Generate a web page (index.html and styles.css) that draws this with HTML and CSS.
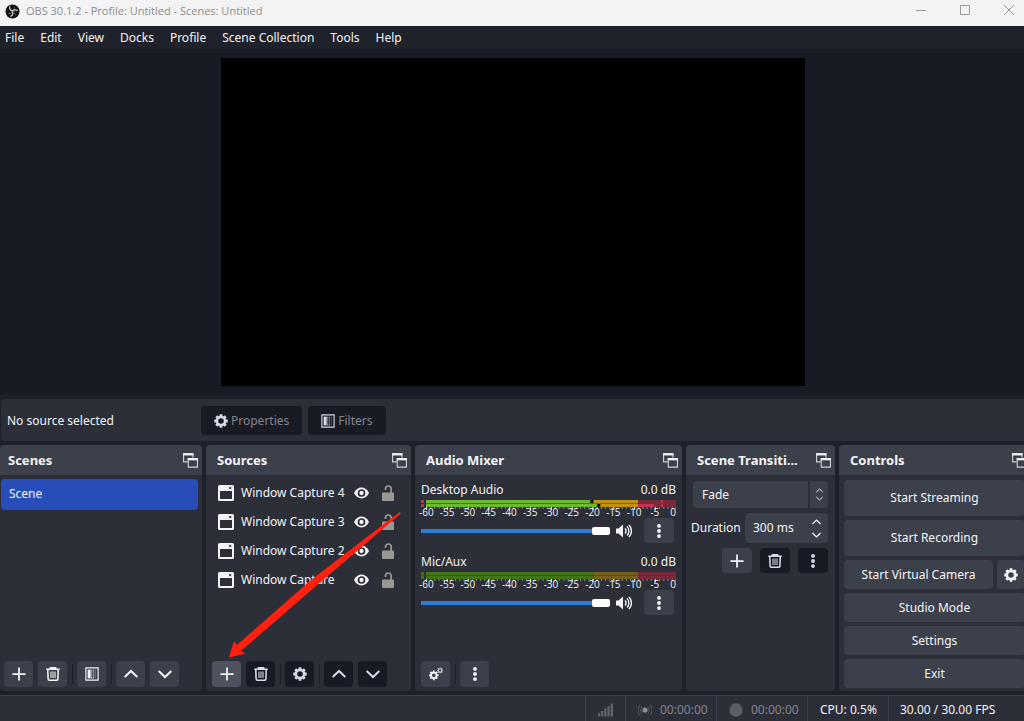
FILE: index.html
```html
<!DOCTYPE html>
<html lang="en">
<head>
    <meta charset="UTF-8">
    <meta name="viewport" content="width=device-width, initial-scale=1.0">
    <title>OBS 30.1.2 - Profile: Untitled - Scenes: Untitled</title>
    <link rel="stylesheet" href="styles.css">
</head>
<body>
    <svg class="sprite" aria-hidden="true">
        <symbol id="i-plus" viewBox="0 0 16 16"><path d="M8 .5v15M.5 8h15" stroke="currentColor" stroke-width="2" fill="none"/></symbol>
        <symbol id="i-trash" viewBox="0 0 16 16"><path d="M.3 2.600h15.400M5 2V.8h6V2M2 3l.4 10.500a1.700 1.700 0 0 0 1.700 1.700h7.800a1.700 1.700 0 0 0 1.700-1.700L14 3" fill="none" stroke="currentColor" stroke-width="1.800"/><path d="M5.700 5v7.500M8 5v7.500M10.300 5v7.500" stroke="currentColor" stroke-width="1.200"/></symbol>
        <symbol id="i-gear" viewBox="0 0 16 16"><circle cx="8" cy="8" r="4.700" fill="none" stroke="currentColor" stroke-width="3"/><path d="M8 .3v3M8 12.700v3M.3 8h3M12.700 8h3M2.600 2.600L5 5M11 11l2.400 2.400M13.400 2.600L11 5M5 11l-2.400 2.400" stroke="currentColor" stroke-width="3.200"/></symbol>
        <symbol id="i-gears" viewBox="0 0 16 16"><circle cx="5.500" cy="9.500" r="3.200" fill="none" stroke="currentColor" stroke-width="2.200"/><path d="M5.500 4v2M5.500 13v2M0 9.500h2M9 9.500h2M1.600 5.600L3 7M8 12l1.400 1.400M9.400 5.600L8 7M3 12l-1.400 1.400" stroke="currentColor" stroke-width="2"/><circle cx="12.700" cy="4" r="2" fill="none" stroke="currentColor" stroke-width="1.400" opacity=".8"/><path d="M12.700 .5v1M12.700 6.500v1M9.200 4h1M15.200 4h1M10.200 1.500l.7.700M14.500 5.800l.7.700M15.200 1.500l-.7.700M10.900 5.800l-.7.700" stroke="currentColor" stroke-width="1.300" opacity=".8"/></symbol>
        <symbol id="i-filter" viewBox="0 0 16 16"><path d="M1 1h14v14H1z" fill="none" stroke="currentColor" stroke-width="1.300"/><path d="M3 3h3.500v10H3z" fill="currentColor"/><path d="M7.500 3v10M9.500 3v10" stroke="currentColor" stroke-width="1.400" stroke-dasharray="1.200 1" opacity=".8"/><path d="M11.800 3v10" stroke="currentColor" stroke-width="1.600" opacity=".25"/></symbol>
        <symbol id="i-up" viewBox="0 0 16 16"><path d="M.8 11.500L8 4.500l7.200 7" fill="none" stroke="currentColor" stroke-width="2.200"/></symbol>
        <symbol id="i-down" viewBox="0 0 16 16"><path d="M.8 4.500L8 11.500l7.200-7" fill="none" stroke="currentColor" stroke-width="2.200"/></symbol>
        <symbol id="i-dots" viewBox="0 0 16 16"><circle cx="8" cy="2.200" r="2.200" fill="currentColor"/><circle cx="8" cy="8" r="2.200" fill="currentColor"/><circle cx="8" cy="13.800" r="2.200" fill="currentColor"/></symbol>
        <symbol id="i-float" viewBox="0 0 16 16"><path d="M5 9.500H.6V1h10v4" fill="none" stroke="currentColor" stroke-width="1.200" opacity=".8"/><path d="M0 .2h11.200v2.400H0z" fill="currentColor"/><path d="M5.600 6h9.800v9H5.600z" fill="none" stroke="currentColor" stroke-width="1.200" opacity=".8"/><path d="M5 5.400h11v2.400H5z" fill="currentColor"/></symbol>
        <symbol id="i-window" viewBox="0 0 16 16"><path d="M1.500 0h13A1.500 1.500 0 0 1 16 1.500v13a1.500 1.500 0 0 1-1.500 1.500h-13A1.500 1.500 0 0 1 0 14.500v-13A1.500 1.500 0 0 1 1.500 0zM2 6v8h12V6z" fill="currentColor" fill-rule="evenodd"/><path d="M11 1.800l2.400 2.400M13.400 1.800L11 4.200" stroke="#2c2e38" stroke-width="1"/></symbol>
        <symbol id="i-eye" viewBox="0 0 16 12"><path d="M0 6C1.800 2.200 4.700.2 8 .2S14.200 2.200 16 6c-1.800 3.800-4.700 5.800-8 5.800S1.800 9.800 0 6z" fill="currentColor"/><circle cx="8" cy="6" r="3.200" fill="none" stroke="#2c2e38" stroke-width="1.800"/></symbol>
        <symbol id="i-lock" viewBox="0 0 12 16"><path d="M3.500 5V3.800a2.800 2.800 0 0 1 5.600 0V8" fill="none" stroke="currentColor" stroke-width="1.700"/><rect y="7.500" width="12" height="8.500" rx="1" fill="currentColor"/></symbol>
        <symbol id="i-speaker" viewBox="0 0 16 14"><path d="M0 4.500h2.500L7 .5v13l-4.500-4H0z" fill="currentColor"/><path d="M9 4.500c1.300 1.500 1.300 3.500 0 5M11 2.600c2.600 2.600 2.600 6.200 0 8.800M13 1c3.300 3.500 3.300 8.500 0 12" fill="none" stroke="currentColor" stroke-width="1.400"/></symbol>
    </svg>

    <header class="titlebar">
        <svg class="logo" viewBox="0 0 16 16">
            <circle cx="8" cy="8" r="7.500" fill="#111"/>
            <path d="M5 2.500c-.5 2.500.7 4.300 3 4.700M13.300 7.200c-2-1.600-4.200-1.200-5.500.8M5.700 13.200c2.400-.9 3.200-3 2.200-5.200" fill="none" stroke="#ccc" stroke-width="1.400"/>
            <path d="M3 9.500c1.500 1 3.200.8 4.500-.7M10.500 3c-.9.900-1.300 2-.9 3.200M11.500 12c-.1-1.500-1-2.600-2.400-3" fill="none" stroke="#888" stroke-width=".8"/>
        </svg>
        <h1>OBS 30.1.2 - Profile: Untitled - Scenes: Untitled</h1>
        <div class="window-buttons">
            <button type="button" aria-label="Minimize"><svg viewBox="0 0 10 10"><path d="M0 5.500h10"/></svg></button>
            <button type="button" aria-label="Maximize"><svg viewBox="0 0 10 10"><path d="M.5.500h9v9h-9z"/></svg></button>
            <button type="button" aria-label="Close"><svg viewBox="0 0 10 10"><path d="M0 0l10 10M10 0L0 10"/></svg></button>
        </div>
    </header>

    <nav class="menubar">
        <a href="#">File</a>
        <a href="#">Edit</a>
        <a href="#">View</a>
        <a href="#">Docks</a>
        <a href="#">Profile</a>
        <a href="#">Scene Collection</a>
        <a href="#">Tools</a>
        <a href="#">Help</a>
    </nav>

    <main class="preview">
        <div class="canvas"></div>
    </main>

    <section class="context-bar">
        <span class="context-label">No source selected</span>
        <button type="button" class="btn dark" disabled><svg class="icon"><use href="#i-gear"/></svg>Properties</button>
        <button type="button" class="btn dark" disabled><svg class="icon"><use href="#i-filter"/></svg>Filters</button>
    </section>

    <div class="docks">
        <section class="dock">
            <header class="dock-title"><h2>Scenes</h2><svg class="icon"><use href="#i-float"/></svg></header>
            <ul class="scene-list">
                <li class="selected">Scene</li>
            </ul>
            <div class="toolbar">
                <button type="button" class="btn tool" aria-label="Add scene"><svg class="icon"><use href="#i-plus"/></svg></button>
                <button type="button" class="btn tool" aria-label="Remove scene"><svg class="icon"><use href="#i-trash"/></svg></button>
                <span class="sep"></span>
                <button type="button" class="btn tool" aria-label="Scene filters"><svg class="icon"><use href="#i-filter"/></svg></button>
                <span class="sep"></span>
                <button type="button" class="btn tool" aria-label="Move up"><svg class="icon"><use href="#i-up"/></svg></button>
                <button type="button" class="btn tool" aria-label="Move down"><svg class="icon"><use href="#i-down"/></svg></button>
            </div>
        </section>

        <section class="dock sources">
            <header class="dock-title"><h2>Sources</h2><svg class="icon"><use href="#i-float"/></svg></header>
            <ul class="source-list">
                <li><svg class="icon"><use href="#i-window"/></svg><span>Window Capture 4</span><svg class="eye"><use href="#i-eye"/></svg><svg class="lock"><use href="#i-lock"/></svg></li>
                <li><svg class="icon"><use href="#i-window"/></svg><span>Window Capture 3</span><svg class="eye"><use href="#i-eye"/></svg><svg class="lock"><use href="#i-lock"/></svg></li>
                <li><svg class="icon"><use href="#i-window"/></svg><span>Window Capture 2</span><svg class="eye"><use href="#i-eye"/></svg><svg class="lock"><use href="#i-lock"/></svg></li>
                <li><svg class="icon"><use href="#i-window"/></svg><span>Window Capture</span><svg class="eye"><use href="#i-eye"/></svg><svg class="lock"><use href="#i-lock"/></svg></li>
            </ul>
            <div class="toolbar">
                <button type="button" class="btn tool active" aria-label="Add source"><svg class="icon"><use href="#i-plus"/></svg></button>
                <button type="button" class="btn tool dark" aria-label="Remove source" disabled><svg class="icon"><use href="#i-trash"/></svg></button>
                <span class="sep"></span>
                <button type="button" class="btn tool dark" aria-label="Source properties" disabled><svg class="icon"><use href="#i-gear"/></svg></button>
                <span class="sep"></span>
                <button type="button" class="btn tool dark" aria-label="Move up" disabled><svg class="icon"><use href="#i-up"/></svg></button>
                <button type="button" class="btn tool dark" aria-label="Move down" disabled><svg class="icon"><use href="#i-down"/></svg></button>
            </div>
            <svg class="arrow" viewBox="228 511 174 148"><path d="M229 657.500L234 641l3 4 74-65 88.500-68 1.500 1.500-78 66.500-82 71 5 2.500z" fill="#ff2010"/></svg>
        </section>

        <section class="dock">
            <header class="dock-title"><h2>Audio Mixer</h2><svg class="icon"><use href="#i-float"/></svg></header>
            <div class="mixer">
                <div class="channel">
                    <div class="channel-head"><label for="desktop">Desktop Audio</label><span>0.0 dB</span></div>
                    <svg class="meter" viewBox="0 0 256 10" preserveAspectRatio="none">
                        <path d="M0 0h3v3H0zM0 4h3v3H0z" fill="#c8314f"/>
                        <path d="M5 0h167v3H5zM5 4h172v3H5z" fill="#6bb92c"/>
                        <path d="M5 3h167v1H5z" fill="#3f7a20"/>
                        <path d="M172 0h46v3h-46zM177 4h41v3h-41z" fill="#c09210"/>
                        <path d="M172 3h46v1h-46z" fill="#806420"/>
                        <path d="M218 0h38v7h-38z" fill="#782a3a"/>
                        <path d="M218 4h16v3h-16zM241 0h2v3h-2zM241 4h2v3h-2z" fill="#c8314f"/>
                        <path d="M170 0h3v3h-3zM177 4h3v3h-3z" fill="#000"/>
                        <use href="#ticks"/>
                    </svg>
                    <div class="scale"><span>-60</span><span>-55</span><span>-50</span><span>-45</span><span>-40</span><span>-35</span><span>-30</span><span>-25</span><span>-20</span><span>-15</span><span>-10</span><span>-5</span><span>0</span></div>
                    <div class="volume">
                        <input type="range" id="desktop" min="0" max="100" value="100">
                        <svg class="speaker"><use href="#i-speaker"/></svg>
                        <button type="button" class="btn" aria-label="Desktop Audio menu"><svg class="icon"><use href="#i-dots"/></svg></button>
                    </div>
                </div>
                <div class="channel">
                    <div class="channel-head"><label for="mic">Mic/Aux</label><span>0.0 dB</span></div>
                    <svg class="meter" viewBox="0 0 256 10" preserveAspectRatio="none">
                        <defs>
                            <g id="ticks">
                                <path d="M5 8H256" stroke="#8b8d94" stroke-width="2" stroke-dasharray="1 3.180"/>
                                <path d="M5 8.500H256.500" stroke="#e8e8ea" stroke-width="3" stroke-dasharray="1 19.900"/>
                            </g>
                        </defs>
                        <path d="M0 0h3v7H0zM5 0h168v7H5z" fill="#427418"/>
                        <path d="M173 0h45v7h-45z" fill="#76601c"/>
                        <path d="M218 0h38v7h-38z" fill="#782a3a"/>
                        <path d="M0 3h256v1H0z" fill="#2c2e38" opacity=".4"/>
                        <use href="#ticks"/>
                    </svg>
                    <div class="scale"><span>-60</span><span>-55</span><span>-50</span><span>-45</span><span>-40</span><span>-35</span><span>-30</span><span>-25</span><span>-20</span><span>-15</span><span>-10</span><span>-5</span><span>0</span></div>
                    <div class="volume">
                        <input type="range" id="mic" min="0" max="100" value="100">
                        <svg class="speaker"><use href="#i-speaker"/></svg>
                        <button type="button" class="btn" aria-label="Mic/Aux menu"><svg class="icon"><use href="#i-dots"/></svg></button>
                    </div>
                </div>
            </div>
            <div class="toolbar">
                <button type="button" class="btn tool" aria-label="Advanced audio properties"><svg class="icon"><use href="#i-gears"/></svg></button>
                <span class="sep"></span>
                <button type="button" class="btn tool" aria-label="Mixer menu"><svg class="icon"><use href="#i-dots"/></svg></button>
            </div>
        </section>

        <section class="dock">
            <header class="dock-title"><h2>Scene Transiti...</h2><svg class="icon"><use href="#i-float"/></svg></header>
            <div class="transitions">
                <div class="combo">
                    <select aria-label="Transition">
                        <option>Fade</option>
                    </select>
                    <span class="combo-arrows"><svg><use href="#i-up"/></svg><svg><use href="#i-down"/></svg></span>
                </div>
                <div class="duration">
                    <label for="duration">Duration</label>
                    <div class="spin">
                        <input type="text" id="duration" value="300 ms">
                        <span class="spin-arrows"><svg><use href="#i-up"/></svg><svg><use href="#i-down"/></svg></span>
                    </div>
                </div>
                <div class="transition-buttons">
                    <button type="button" class="btn" aria-label="Add transition"><svg class="icon"><use href="#i-plus"/></svg></button>
                    <button type="button" class="btn dark" aria-label="Remove transition" disabled><svg class="icon"><use href="#i-trash"/></svg></button>
                    <button type="button" class="btn dark" aria-label="Transition menu" disabled><svg class="icon"><use href="#i-dots"/></svg></button>
                </div>
            </div>
        </section>

        <section class="dock">
            <header class="dock-title controls-title"><h2>Controls</h2><svg class="icon"><use href="#i-float"/></svg></header>
            <div class="controls">
                <button type="button" class="btn tall">Start Streaming</button>
                <button type="button" class="btn tall">Start Recording</button>
                <div class="camera">
                    <button type="button" class="btn">Start Virtual Camera</button>
                    <button type="button" class="btn" aria-label="Virtual camera settings"><svg class="icon"><use href="#i-gear"/></svg></button>
                </div>
                <button type="button" class="btn">Studio Mode</button>
                <button type="button" class="btn">Settings</button>
                <button type="button" class="btn">Exit</button>
            </div>
        </section>
    </div>

    <footer class="statusbar">
        <div class="signal"><svg viewBox="0 0 16 14"><path d="M0 10h2v4H0zM3 8h2.500v6H3zM6.500 5.500H9V14H6.500zM10 3h2.500v11H10zM13.500 0H16v14h-2.500z" fill="#62646c"/></svg></div>
        <div class="timer"><svg viewBox="0 0 14 14"><circle cx="7" cy="7" r="2.600" fill="#8c8e94"/><path d="M4 3.500c-1.600 2-1.600 5 0 7M10 3.500c1.600 2 1.600 5 0 7M2 1.500c-2.500 3-2.500 8 0 11M12 1.500c2.500 3 2.500 8 0 11" fill="none" stroke="#5a5c64" stroke-width="1"/></svg>00:00:00</div>
        <div class="timer"><svg viewBox="0 0 14 14"><circle cx="7" cy="7" r="6.700" fill="#5c5e66"/></svg>00:00:00</div>
        <div class="cpu">CPU: 0.5%</div>
        <div class="fps">30.00 / 30.00 FPS</div>
    </footer>
</body>
</html>
```
FILE: styles.css
```css
* {
    box-sizing: border-box;
    margin: 0;
    padding: 0;
}

body {
    display: flex;
    flex-direction: column;
    gap: 4px;
    height: 100vh;
    overflow: hidden;
    background: #1e202a;
    color: #f4f4f6;
    font-family: "Noto Sans", "Open Sans", sans-serif;
    font-size: 12px;
    line-height: 16px;
}

button,
input,
select {
    font: inherit;
    color: inherit;
    border: none;
}

ul {
    list-style: none;
}

.sprite {
    position: absolute;
    width: 0;
    height: 0;
}

.icon {
    width: 14px;
    height: 14px;
    flex: none;
}

/* Title bar and menu */
.titlebar {
    display: flex;
    align-items: center;
    height: 26px;
    padding: 0 0 4px 5px;
    background: #f3f3f3;
    color: #8e8e8e;
    margin-bottom: -4px;
}

.titlebar h1 {
    flex: 1;
    font-family: "Open Sans", sans-serif;
    font-size: 11px;
    font-weight: 400;
}

.logo {
    width: 15px;
    height: 15px;
    margin-right: 6px;
}

.window-buttons {
    display: flex;
    margin-right: -7px;
}

.window-buttons button {
    width: 44px;
    height: 20px;
    background: none;
}

.window-buttons svg {
    width: 10px;
    height: 10px;
    fill: none;
    stroke: #999;
    overflow: visible;
}

.menubar {
    display: flex;
    gap: 16px;
    height: 23px;
    padding: 4px 5px;
    background: #1f222a;
    margin-bottom: -4px;
}

.menubar a {
    color: inherit;
    text-decoration: none;
}

/* Preview */
.preview {
    flex: 1;
    min-height: 0;
    display: flex;
    justify-content: center;
    padding: 9px 0 9px 2px;
    background: #181a24;
}

.canvas {
    height: 100%;
    aspect-ratio: 16 / 9;
    background: #000;
}

/* Buttons */
.btn {
    display: flex;
    align-items: center;
    justify-content: center;
    gap: 3px;
    background: #3c404b;
    border-radius: 4px;
}

.btn.dark {
    background: #181a24;
    color: #d8d9e4;
}

.btn.active {
    background: #4f525e;
}

.context-bar {
    display: flex;
    align-items: center;
    gap: 6px;
    height: 42px;
    padding: 1px 6px 0;
    margin-left: 1px;
    background: #2c2e38;
    border-radius: 4px 0 0 4px;
}

.context-label {
    width: 188px;
}

.context-bar .btn {
    height: 29px;
    padding: 0 13px;
    color: #83858c;
}

.context-bar .icon {
    color: #d8d9e4;
}

/* Docks, the last one runs a little past the window edge */
.docks {
    display: grid;
    grid-template-columns: 202fr 205fr 267fr 149fr 190fr;
    gap: 4px;
    margin-right: -5px;
}

.dock {
    display: flex;
    flex-direction: column;
    position: relative;
    min-width: 0;
    background: #2c2e38;
    border-radius: 4px;
}

.dock-title {
    display: flex;
    align-items: center;
    gap: 12px;
    height: 30px;
    padding: 0 4px 0 11px;
    background: #3c404b;
    border-radius: 4px 4px 0 0;
}

.dock:first-child .dock-title {
    padding-left: 8px;
}

.dock-title h2 {
    flex: 1;
    font-size: 13px;
    font-weight: 700;
    white-space: nowrap;
}

.dock-title .icon {
    width: 15px;
    height: 15px;
}

.controls-title .icon {
    margin-right: -2px;
}

.toolbar {
    display: flex;
    gap: 5px;
    margin-top: auto;
    padding: 0 4px 4px;
}

.sources .toolbar,
.mixer + .toolbar {
    padding-left: 6px;
}

.tool {
    width: 29px;
    height: 26px;
}

.sep {
    width: 1px;
    height: 20px;
    margin: 3px -1px 3px 0;
    background: #1c1e28;
}

.scene-list {
    padding: 4px 4px 0 1px;
}

.scene-list .selected {
    padding: 7px 8px 8px;
    background: #284cb8;
    border-radius: 4px;
}

.source-list {
    padding: 3px 17px 0 12px;
}

.source-list li {
    display: flex;
    align-items: center;
    height: 29px;
}

.source-list .icon {
    width: 16px;
    height: 16px;
}

.source-list span {
    flex: 1;
    margin-left: 7px;
    white-space: nowrap;
}

.eye {
    width: 15px;
    height: 12px;
}

.lock {
    width: 12px;
    height: 16px;
    margin-left: 13px;
    color: #9a9892;
}

.arrow {
    position: absolute;
    left: 22px;
    top: 66px;
    width: 174px;
    height: 148px;
    pointer-events: none;
}

/* Mixer */
.mixer {
    padding: 7px 6px 0 6px;
}

.channel {
    height: 72px;
}

.channel-head {
    display: flex;
    justify-content: space-between;
    height: 18px;
}

.meter {
    display: block;
    width: 100%;
    height: 10px;
}

.scale {
    display: flex;
    height: 9px;
    margin: -2px -10px 0 -5px;
    font-family: "Open Sans", sans-serif;
    font-size: 10px;
    line-height: 9px;
}

.scale span {
    flex: 1 0 0;
    min-width: 0;
    text-align: center;
}

.scale span:last-child {
    text-align: left;
    text-indent: 5px;
}

.volume {
    display: flex;
    align-items: center;
    height: 27px;
    padding-right: 2px;
}

.volume input {
    flex: 1;
    min-width: 0;
    height: 8px;
    appearance: none;
    background: linear-gradient(#2b7fd8, #2b7fd8) center / 100% 4px no-repeat;
}

.volume input::-webkit-slider-thumb {
    appearance: none;
    width: 18px;
    height: 8px;
    background: #fff;
    border-radius: 2px;
}

.speaker {
    width: 16px;
    height: 14px;
    margin: 0 12px 0 6px;
}

.volume .btn {
    width: 30px;
    height: 25px;
}

/* Transitions */
.transitions {
    display: flex;
    flex-direction: column;
    gap: 5px;
    padding: 6px 7px 0 5px;
}

.combo {
    position: relative;
    margin-left: 2px;
}

.combo select {
    display: block;
    width: 100%;
    height: 27px;
    padding-left: 9px;
    appearance: none;
    background: #3c404b;
    border-radius: 4px;
}

.combo-arrows {
    position: absolute;
    top: 0;
    right: 0;
    bottom: 0;
    display: flex;
    flex-direction: column;
    align-items: center;
    justify-content: center;
    gap: 1px;
    width: 20px;
    border-left: 2px solid #2c2e38;
    pointer-events: none;
}

.combo-arrows svg {
    width: 7px;
    height: 7px;
}

.duration {
    display: flex;
    align-items: center;
    justify-content: space-between;
}

.spin {
    display: flex;
    align-items: center;
    width: 83px;
    height: 30px;
    padding: 0 7px 0 8px;
    background: #3c404b;
    border-radius: 4px;
}

.spin input {
    flex: 1;
    min-width: 0;
    background: none;
}

.spin-arrows {
    display: flex;
    flex-direction: column;
    gap: 3px;
}

.spin-arrows svg {
    width: 9px;
    height: 10px;
}

.transition-buttons {
    display: flex;
    justify-content: flex-end;
    gap: 8px;
}

.transition-buttons .btn {
    width: 30px;
    height: 25px;
}

/* Controls */
.controls {
    display: flex;
    flex-direction: column;
    gap: 4px;
    padding: 5px 4px 3px 5px;
}

.controls .btn {
    height: 29px;
}

.controls .tall {
    height: 36px;
}

.camera {
    display: flex;
    gap: 4px;
}

.camera .btn:first-child {
    flex: 1;
}

.camera .btn:last-child {
    width: 28px;
}

/* Status bar */
.statusbar {
    display: flex;
    justify-content: flex-end;
    height: 26px;
    background: #2c2e38;
    border-top: 1px solid #3c404b;
}

.statusbar div {
    display: flex;
    align-items: center;
    gap: 6px;
    padding: 3px 12px 0;
    border-left: 1px solid #3c404b;
    white-space: nowrap;
}

.statusbar svg {
    width: 14px;
    height: 14px;
}

.statusbar .signal svg {
    width: 15px;
}

.statusbar .timer {
    width: 91px;
    padding-right: 8px;
    gap: 8px;
    color: #83858c;
}

.statusbar .cpu {
    width: 81px;
}

.statusbar .fps {
    width: 136px;
    padding-left: 11px;
}
```
